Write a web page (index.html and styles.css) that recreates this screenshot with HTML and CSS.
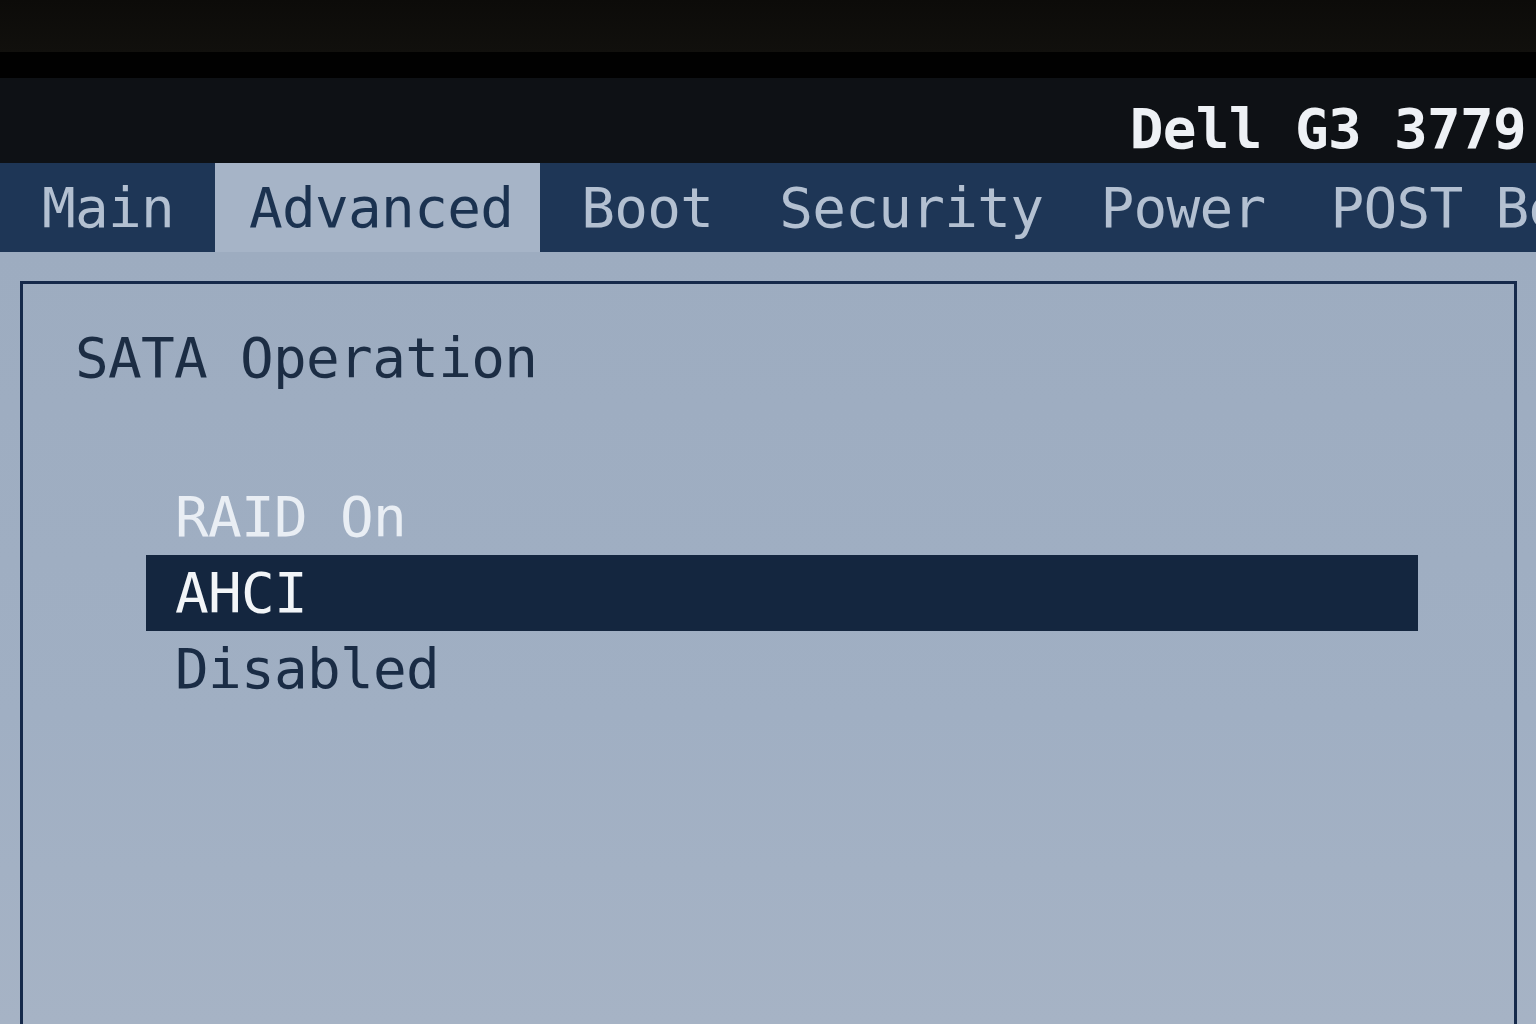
FILE: index.html
```html
<!DOCTYPE html>
<html lang="en">
<head>
    <meta charset="UTF-8">
    <meta name="viewport" content="width=device-width, initial-scale=1.0">
    <title>BIOS Setup - SATA Operation</title>
    <link rel="stylesheet" href="styles.css">
</head>
<body>
    <!-- Monitor bezel and screen edge -->
    <div class="bezel"></div>
    <div class="screen-edge"></div>

    <header class="title-bar">
        <span class="model">Dell G3 3779</span>
    </header>

    <nav class="tabs">
        <div class="tab tab-first">Main</div>
        <div class="tab active">Advanced</div>
        <div class="tab tab-after-active">Boot</div>
        <div class="tab tab-security">Security</div>
        <div class="tab tab-power">Power</div>
        <div class="tab">POST Behavior</div>
    </nav>

    <main class="content">
        <section class="panel">
            <h2 class="panel-title">SATA Operation</h2>
            <ul class="options">
                <li class="option option-alt">RAID On</li>
                <li class="option selected">AHCI</li>
                <li class="option">Disabled</li>
            </ul>
        </section>
    </main>
</body>
</html>
```

FILE: styles.css
```css
* {
    margin: 0;
    padding: 0;
    box-sizing: border-box;
}

html {
    overflow: hidden;
}

body {
    width: 1536px;
    height: 1024px;
    overflow: hidden;
    background-color: #9eadc1;
    font-family: 'DejaVu Sans Mono', 'Liberation Mono', monospace;
    font-size: 56px;
    letter-spacing: -0.7px;
}

/* Bezel */
.bezel {
    height: 52px;
    background: linear-gradient(180deg, #0c0b09 0%, #11100d 100%);
}

.screen-edge {
    height: 26px;
    background-color: #010101;
}

/* Title bar */
.title-bar {
    height: 85px;
    padding: 16px 10px 0 0;
    background-color: #0e1115;
    text-align: right;
    line-height: 69px;
}

.model {
    color: #eef1f5;
    font-weight: bold;
}

/* Tabs */
.tabs {
    display: flex;
    height: 89px;
    background-color: #1e3656;
    white-space: nowrap;
    overflow: hidden;
    line-height: 89px;
}

.tab {
    padding: 0 33px;
    color: #b3c0d1;
    flex-shrink: 0;
}

.tab-first {
    padding: 0 41px 0 42px;
}

.tab.active {
    padding: 0 27px 0 34px;
    background-color: #a6b4c7;
    color: #1b3250;
}

.tab-after-active {
    padding-left: 41px;
}

.tab-security {
    padding-right: 24px;
}

.tab-power {
    padding-right: 32px;
}

/* Content */
.content {
    height: 772px;
    overflow: hidden;
    padding: 29px 0 0 20px;
    background: linear-gradient(180deg, #9dacc0 0%, #a0afc3 60%, #a6b3c5 100%);
}

.panel {
    width: 1497px;
    height: 800px;
    border: 3px solid #15294a;
    padding-top: 36px;
}

.panel-title {
    font-size: 56px;
    font-weight: normal;
    line-height: 76px;
    padding-left: 52px;
    color: #1c2d44;
}

.options {
    list-style: none;
    margin: 83px 96px 0 123px;
}

.option {
    height: 76px;
    line-height: 76px;
    padding-left: 29px;
    color: #1a2c45;
}

.option-alt {
    color: #e9eef4;
}

.option.selected {
    background-color: #14263f;
    color: #f2f5f8;
}
```
